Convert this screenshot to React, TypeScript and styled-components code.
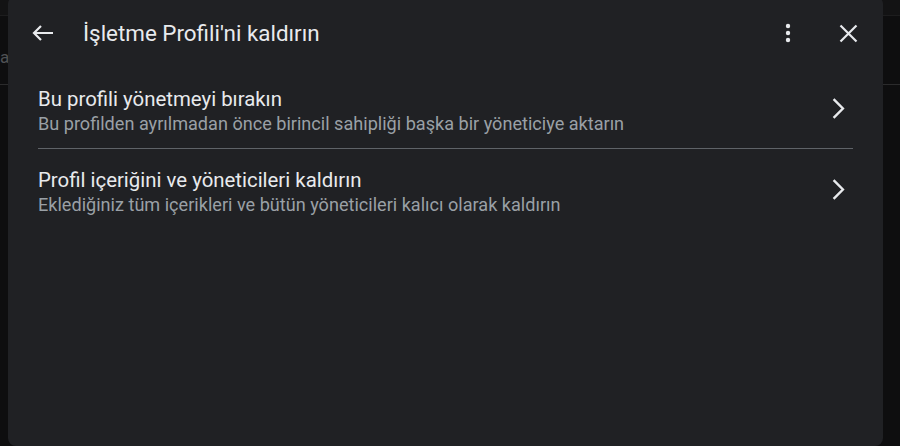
import React from "react";
import styled, { createGlobalStyle } from "styled-components";

const Global = createGlobalStyle`
  html, body { margin: 0; padding: 0; background: #0e0e0f; }
  body { font-family: Roboto, "Noto Sans", Arial, sans-serif; overflow: hidden; }
`;

const Stage = styled.div`
  position: relative;
  width: 900px;
  height: 446px;
  overflow: hidden;
  background: #0e0e0f;
`;

const BackPage = styled.div`
  display: flex;
  flex-direction: column;
  height: 100%;
`;

const BackTopBar = styled.div`
  height: 15px;
  background: #131314;
  border-bottom: 1px solid #1d1d1e;
`;

const BackRow = styled.div`
  display: flex;
  align-items: flex-start;
  height: 68px;
  border-bottom: 1px solid #2b2b2c;
`;

const BackLabel = styled.span`
  margin: 31px 0 0 0;
  font-size: 17px;
  line-height: 20px;
  color: #505154;
`;

const Dialog = styled.div`
  position: absolute;
  left: 8px;
  top: -4px;
  width: 875px;
  height: 450px;
  background: #202124;
  border-radius: 8px;
  display: flex;
  flex-direction: column;
  color: #e8eaed;
`;

const Header = styled.div`
  display: flex;
  align-items: center;
  height: 66px;
  margin-top: 4px;
  padding: 0 12px 0 12px;
`;

const IconButton = styled.button`
  width: 46px;
  height: 46px;
  border: 0;
  background: transparent;
  padding: 0;
  display: flex;
  align-items: center;
  justify-content: center;
  color: #e8eaed;
  cursor: pointer;
`;

const Title = styled.h1`
  flex: 1;
  margin: 0 0 0 17px;
  font-size: 22.4px;
  font-weight: 400;
  color: #e8eaed;
`;

const Actions = styled.div`
  display: flex;
  align-items: center;
  gap: 14px;
`;

const List = styled.div`
  display: flex;
  flex-direction: column;
  padding: 2px 30px 0 30px;
`;

const Item = styled.div<{ $divider?: boolean }>`
  display: flex;
  align-items: flex-start;
  padding: 18px 0 12px 0;
  border-bottom: ${(p) => (p.$divider ? "1px solid #5f6368" : "1px solid transparent")};
`;

const ItemText = styled.div`
  flex: 1;
  display: flex;
  flex-direction: column;
`;

const ItemTitle = styled.div`
  font-size: 20.4px;
  font-weight: 400;
  line-height: 26px;
  color: #e8eaed;
`;

const ItemSub = styled.div`
  font-size: 18.1px;
  line-height: 24px;
  color: #9aa0a6;
`;

const Chevron = styled.div`
  width: 40px;
  display: flex;
  justify-content: center;
  margin: 12px -5px 0 0;
`;

const ArrowBack = () => (
  <svg width="24" height="20" viewBox="0 0 24 20" fill="none" stroke="#e8eaed" strokeWidth="2.2">
    <path d="M22 10H3M10 3L3 10l7 7" />
  </svg>
);

const More = () => (
  <svg width="6" height="20" viewBox="0 0 6 20" fill="#e8eaed">
    <circle cx="3" cy="3" r="2.2" />
    <circle cx="3" cy="10" r="2.2" />
    <circle cx="3" cy="17" r="2.2" />
  </svg>
);

const Close = () => (
  <svg width="19" height="19" viewBox="0 0 19 19" fill="none" stroke="#e8eaed" strokeWidth="2.2">
    <path d="M1.5 1.5l16 16M17.5 1.5l-16 16" />
  </svg>
);

const ChevronRight = () => (
  <svg width="13" height="21" viewBox="0 0 13 21" fill="none" stroke="#e8eaed" strokeWidth="2.4">
    <path d="M1.6 1.2l9.3 9.3-9.3 9.3" />
  </svg>
);

const items = [
  {
    title: "Bu profili yönetmeyi bırakın",
    sub: "Bu profilden ayrılmadan önce birincil sahipliği başka bir yöneticiye aktarın",
  },
  {
    title: "Profil içeriğini ve yöneticileri kaldırın",
    sub: "Eklediğiniz tüm içerikleri ve bütün yöneticileri kalıcı olarak kaldırın",
  },
];

export default function App() {
  return (
    <Stage>
      <Global />
      <BackPage>
        <BackTopBar />
        <BackRow>
          <BackLabel>al</BackLabel>
        </BackRow>
      </BackPage>
      <Dialog>
        <Header>
          <IconButton aria-label="Geri">
            <ArrowBack />
          </IconButton>
          <Title>İşletme Profili'ni kaldırın</Title>
          <Actions>
            <IconButton aria-label="Diğer">
              <More />
            </IconButton>
            <IconButton aria-label="Kapat">
              <Close />
            </IconButton>
          </Actions>
        </Header>
        <List>
          {items.map((it, i) => (
            <Item key={i} $divider={i === 0}>
              <ItemText>
                <ItemTitle>{it.title}</ItemTitle>
                <ItemSub>{it.sub}</ItemSub>
              </ItemText>
              <Chevron>
                <ChevronRight />
              </Chevron>
            </Item>
          ))}
        </List>
      </Dialog>
    </Stage>
  );
}
